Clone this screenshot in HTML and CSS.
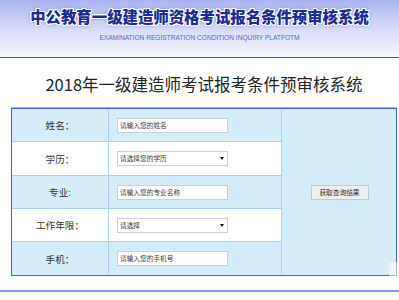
FILE: index.html
```html
<!DOCTYPE html>
<html lang="zh-CN">
<head>
<meta charset="utf-8">
<title>中公教育一级建造师资格考试报名条件预审核系统</title>
<link rel="stylesheet" href="styles.css">
</head>
<body>
<div class="header">
  <div class="brand">中公教育一级建造师资格考试报名条件预审核系统</div>
  <div class="sub">EXAMINATION REGISTRATION CONDITION INQUIRY PLATFOTM</div>
</div>
<div class="wrap">
  <div class="title">2018年一级建造师考试报考条件预审核系统</div>
  <div class="form">
    <div class="rows">
      <div class="row blue r1">
        <div class="label">姓名：</div>
        <div class="field"><div class="input">请输入您的姓名</div></div>
      </div>
      <div class="row r2">
        <div class="label">学历：</div>
        <div class="field"><div class="input select">请选择您的学历<span class="arrow"></span></div></div>
      </div>
      <div class="row blue r3">
        <div class="label">专业:</div>
        <div class="field"><div class="input">请输入您的专业名称</div></div>
      </div>
      <div class="row r4">
        <div class="label">工作年限：</div>
        <div class="field"><div class="input select">请选择<span class="arrow"></span></div></div>
      </div>
      <div class="row blue r5 last">
        <div class="label">手机：</div>
        <div class="field"><div class="input">请输入您的手机号</div></div>
      </div>
    </div>
    <div class="side">
      <div class="btn">获取查询结果</div>
    </div>
  </div>
</div>
<div class="footline"></div>
<div class="float"></div>
</body>
</html>
```
FILE: styles.css
```css
html, body {
  margin: 0;
  padding: 0;
  background: #fff;
  font-family: "Noto Sans CJK SC", "Liberation Sans", sans-serif;
  overflow: hidden;
}
.header {
  height: 57px;
  border-bottom: 1px solid #3a4ec6;
  background: linear-gradient(to bottom, #aab3f1 0%, #d3d8f8 45%, #f7f7fe 100%);
  display: flex;
  flex-direction: column;
  align-items: center;
}
.brand {
  margin-top: 4px;
  height: 24px;
  line-height: 24px;
  white-space: nowrap;
  font-size: 15.4px;
  font-weight: 900;
  color: #1b2c92;
  text-shadow: 1px 0 0 #fff, -1px 0 0 #fff, 0 1px 0 #fff, 0 -1px 0 #fff,
    1px 1px 0 #fff, -1px -1px 0 #fff, 1px -1px 0 #fff, -1px 1px 0 #fff,
    0 0 4px #5a6ae0;
}
.sub {
  margin-top: 6px;
  white-space: nowrap;
  font-family: "Liberation Sans", sans-serif;
  font-size: 6.6px;
  line-height: 8px;
  color: #5566cc;
}
.wrap {
  margin-left: 11px;
  width: 386px;
}
.title {
  height: 50px;
  line-height: 50px;
  text-align: center;
  font-size: 16.5px;
  color: #222;
  border-bottom: 1px solid #a4aeec;
  box-sizing: border-box;
  padding-top: 1px;
}
.form {
  display: flex;
  border: 1px solid #4a5ee2;
  background: #d5ecf9;
}
.rows {
  width: 269px;
  border-right: 1px solid #a9d3f3;
}
.row {
  display: flex;
  height: 32px;
  border-bottom: 1px solid #a9d3f3;
  background: #fff;
}
.row.blue { background: #d5ecf9; }
.row.r2, .row.r5 { height: 33px; }
.row.last { border-bottom: 0; }
.label {
  width: 96px;
  border-right: 1px solid #a9d3f3;
  display: flex;
  align-items: center;
  justify-content: center;
  font-size: 9.6px;
  color: #333;
}
.field {
  flex: 1;
  display: flex;
  align-items: center;
  padding-left: 8px;
}
.input {
  position: relative;
  width: 111px;
  height: 15px;
  box-sizing: border-box;
  border: 1px solid #cfcfcf;
  background: #fff;
  font-size: 6.7px;
  line-height: 13px;
  color: #3a3340;
  padding-left: 2px;
}
.arrow {
  position: absolute;
  right: 3px;
  top: 5px;
  width: 0;
  height: 0;
  border-left: 2px solid transparent;
  border-right: 2px solid transparent;
  border-top: 3px solid #111;
}
.side {
  flex: 1;
  display: flex;
  align-items: center;
  justify-content: center;
}
.btn {
  width: 58px;
  height: 15px;
  box-sizing: border-box;
  border: 1px solid #c8c8c8;
  background: #efefef;
  font-size: 6.7px;
  line-height: 13px;
  text-align: center;
  color: #333;
  margin-left: 1px;
}
.footline {
  margin-top: 14px;
  height: 2px;
  background: #8896e8;
}
.float {
  position: absolute;
  left: 389px;
  top: 262px;
  width: 14px;
  height: 16px;
  border-radius: 3px;
  background: rgba(255, 255, 255, 0.55);
}
```
